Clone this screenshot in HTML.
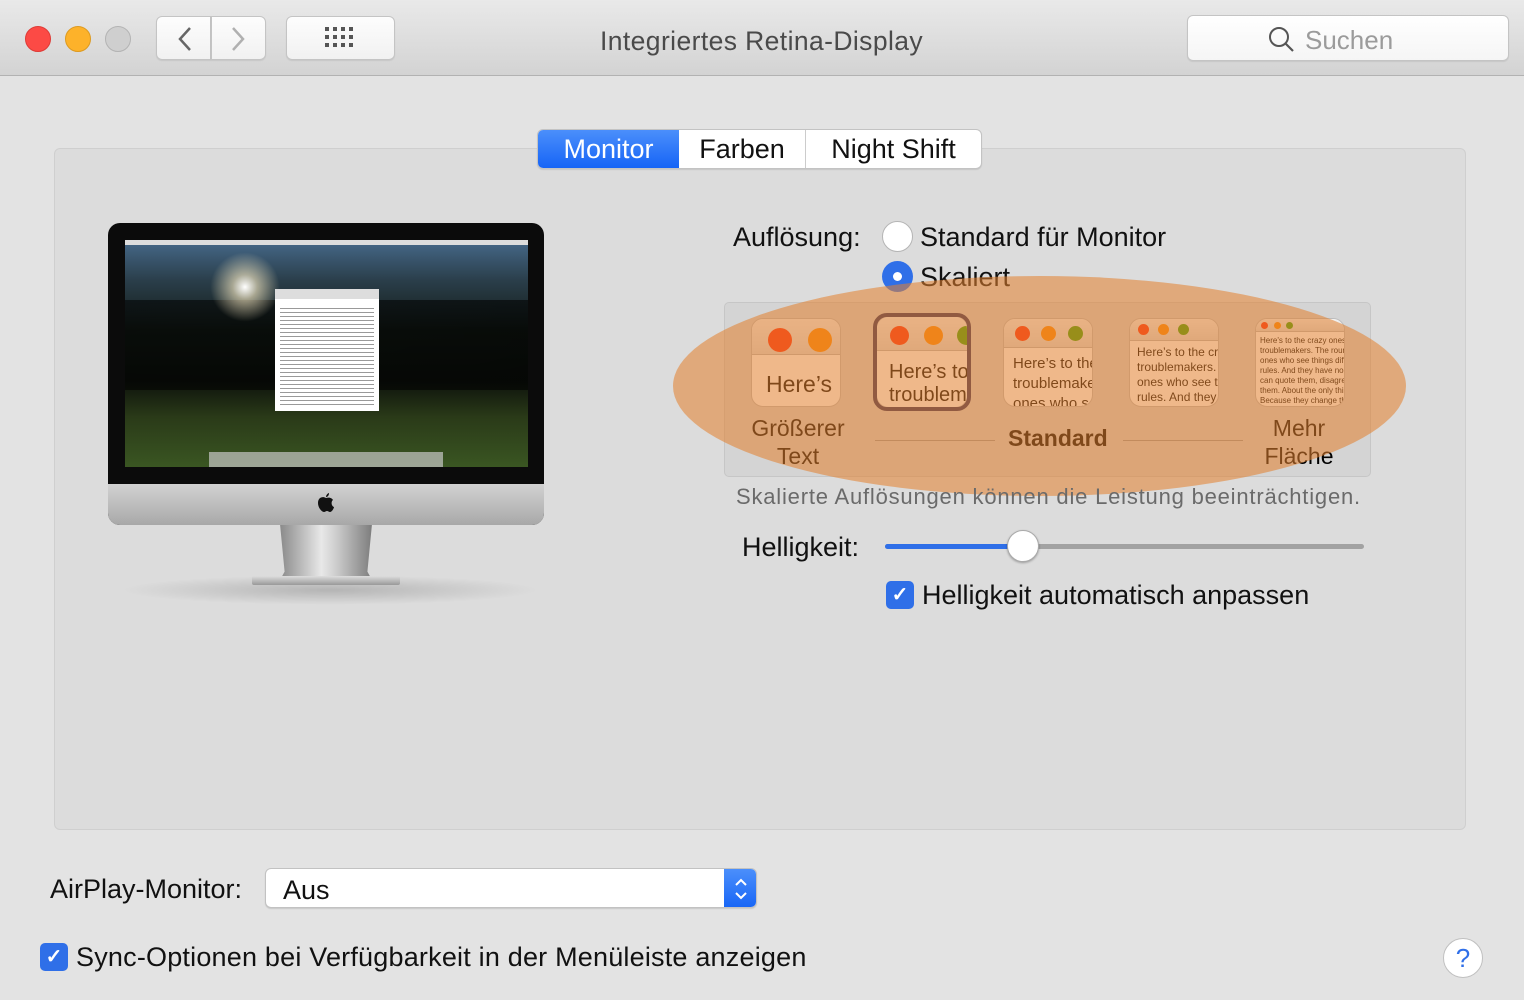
<!DOCTYPE html>
<html><head><meta charset="utf-8"><style>
*{box-sizing:border-box;margin:0;padding:0}
body{width:1524px;height:1000px;background:#e3e3e3;font-family:"Liberation Sans",sans-serif;position:relative;overflow:hidden;color:#111}
.abs{position:absolute}
.tb{left:0;top:0;width:1524px;height:76px;background:linear-gradient(#e9e9e9,#d3d3d3);border-bottom:1px solid #b2b2b2}
.dot{width:26px;height:26px;border-radius:50%;top:26px}
.btn{background:linear-gradient(#fdfdfd,#f1f1f1);border:1px solid #c4c4c4;border-radius:6px;box-shadow:0 1px 1px rgba(0,0,0,.08)}
.panel{left:54px;top:148px;width:1412px;height:682px;background:#dcdcdc;border:1px solid #cfcfcf;border-radius:6px}
.tabs{left:537px;top:129px;height:40px;display:flex;border:1px solid #c3c3c3;border-radius:6px;overflow:hidden;background:#fff;font-size:27px;box-shadow:0 1px 1px rgba(0,0,0,.1)}
.tabs div{height:38px;line-height:38px;text-align:center}
.lbl{font-size:27px;white-space:nowrap}
.thumb{border-radius:12px;overflow:hidden;background:#fff;border:1px solid #bbb}
.thumb .bar{background:linear-gradient(#f2f2f2,#ddd);border-bottom:1px solid #b8b8b8;position:relative}
.thumb .c{position:absolute;border-radius:50%}
.thumb .tx{font-family:"Liberation Sans",sans-serif;color:#000;white-space:nowrap;overflow:hidden}
.chk{background:#2f6fe8;border-radius:5px;color:#fff;text-align:center;font-weight:bold}
</style></head><body>
<div class="abs tb"></div>
<div class="abs dot" style="left:25px;background:#fc4a45;border:1px solid #de3b36"></div>
<div class="abs dot" style="left:65px;background:#fdb22a;border:1px solid #dd9a20"></div>
<div class="abs dot" style="left:105px;background:#cfcfcf;border:1px solid #b3b3b3"></div>
<div class="abs btn" style="left:156px;top:16px;width:55px;height:44px;border-radius:6px 0 0 6px"></div>
<div class="abs btn" style="left:211px;top:16px;width:55px;height:44px;border-radius:0 6px 6px 0"></div>
<svg class="abs" style="left:170px;top:24px" width="90" height="30"><path d="M20 4 L10 15 L20 26" stroke="#666" stroke-width="2.5" fill="none"/><path d="M63 4 L73 15 L63 26" stroke="#b0b0b0" stroke-width="2.5" fill="none"/></svg>
<div class="abs btn" style="left:286px;top:16px;width:109px;height:44px"></div>
<svg class="abs" style="left:325px;top:27px" width="32" height="22"><g fill="#555"><rect x="0" y="0" width="4" height="4"/><rect x="8" y="0" width="4" height="4"/><rect x="16" y="0" width="4" height="4"/><rect x="24" y="0" width="4" height="4"/><rect x="0" y="8" width="4" height="4"/><rect x="8" y="8" width="4" height="4"/><rect x="16" y="8" width="4" height="4"/><rect x="24" y="8" width="4" height="4"/><rect x="0" y="16" width="4" height="4"/><rect x="8" y="16" width="4" height="4"/><rect x="16" y="16" width="4" height="4"/><rect x="24" y="16" width="4" height="4"/></g></svg>
<div class="abs lbl" style="left:600px;top:26px;color:#4a4a4a;font-size:26.5px;letter-spacing:0.4px">Integriertes Retina-Display</div>
<div class="abs btn" style="left:1187px;top:15px;width:322px;height:46px;background:linear-gradient(#fff,#f5f5f5)"></div>
<svg class="abs" style="left:1268px;top:26px" width="28" height="28"><circle cx="11" cy="11" r="9" stroke="#555" stroke-width="2" fill="none"/><path d="M17.5 17.5 L25 25" stroke="#555" stroke-width="2.2"/></svg>
<div class="abs lbl" style="left:1305px;top:25px;color:#9b9b9b;font-size:26px">Suchen</div>

<div class="abs panel"></div>
<div class="abs tabs">
<div style="width:141px;background:linear-gradient(#4b8ffb,#1664f6);color:#fff">Monitor</div>
<div style="width:127px;border-right:1px solid #ccc">Farben</div>
<div style="width:175px">Night Shift</div>
</div>

<!-- iMac -->
<div class="abs" style="left:120px;top:575px;width:420px;height:30px;border-radius:50%;background:radial-gradient(ellipse,rgba(0,0,0,.18),rgba(0,0,0,0) 70%)"></div>
<div class="abs" style="left:280px;top:524px;width:92px;height:56px;background:linear-gradient(90deg,#8a8a8a,#e8e8e8 45%,#cfcfcf 60%,#7d7d7d);clip-path:polygon(0 0,100% 0,95% 85%,100% 100%,0 100%,5% 85%)"></div>
<div class="abs" style="left:252px;top:576px;width:148px;height:9px;background:linear-gradient(#ddd,#999);border-radius:2px"></div>
<div class="abs" style="left:108px;top:223px;width:436px;height:302px;border-radius:12px;background:#0b0b0b;overflow:hidden">
<div class="abs" style="left:0;top:261px;width:436px;height:41px;background:linear-gradient(#d2d2d2,#a8a8a8)"></div>
<div class="abs" style="left:17px;top:17px;width:403px;height:227px;background:linear-gradient(#46698a 0%,#2a3e4a 18%,#121a14 40%,#0d120c 62%,#2a3a18 78%,#3a5622 100%);overflow:hidden">
<div class="abs" style="left:-20px;top:60px;width:450px;height:90px;background:radial-gradient(ellipse at 25% 40%,rgba(0,0,0,.5),rgba(0,0,0,.6))"></div>
<div class="abs" style="left:85px;top:12px;width:70px;height:70px;border-radius:50%;background:radial-gradient(#fff,rgba(255,240,200,.6) 25%,rgba(255,255,255,0) 70%)"></div>
<div class="abs" style="left:0;top:0;width:403px;height:5px;background:#ddd"></div>
<div class="abs" style="left:150px;top:49px;width:104px;height:122px;background:#fff"><div style="height:10px;background:#ddd"></div><div style="margin:6px 5px;height:100px;background:repeating-linear-gradient(#fff 0,#fff 3px,#999 3px,#999 4px)"></div></div>
<div class="abs" style="left:84px;top:212px;width:234px;height:15px;background:rgba(200,200,200,.7)"></div>
</div>
<svg class="abs" style="left:209px;top:270px" width="18" height="20"><path d="M9 5 C6 3 1 4 1 10 C1 15 5 19 7 19 C8 19 9 18 10 18 C11 18 12 19 13 19 C15 19 17 15 17 14 C14 13 14 8 16 7 C15 5 12 4 9 5Z M9 4 C9 2 11 0 12 0 C12 2 11 4 9 4Z" fill="#111"/></svg>
</div>

<!-- resolution -->
<div class="abs lbl" style="left:733px;top:222px">Auflösung:</div>
<div class="abs" style="left:882px;top:221px;width:31px;height:31px;border-radius:50%;background:#fff;border:1px solid #b5b5b5"></div>
<div class="abs lbl" style="left:920px;top:222px">Standard für Monitor</div>
<div class="abs" style="left:882px;top:261px;width:31px;height:31px;border-radius:50%;background:#2f6fe8"><div class="abs" style="left:11px;top:11px;width:9px;height:9px;border-radius:50%;background:#fff"></div></div>
<div class="abs lbl" style="left:920px;top:262px">Skaliert</div>

<div class="abs" style="left:724px;top:302px;width:647px;height:175px;background:#d4d4d4;border:1px solid #c6c6c6;border-radius:5px"></div>
<!-- thumbs -->
<div class="abs thumb" style="left:751px;top:318px;width:90px;height:89px"><div class="bar" style="height:36px"><div class="c" style="left:16px;top:9px;width:24px;height:24px;background:#ff2a0a"></div><div class="c" style="left:56px;top:9px;width:24px;height:24px;background:#ff8a00"></div></div><div class="tx" style="font-size:23px;padding:16px 0 0 14px">Here’s</div></div>
<div class="abs" style="left:873px;top:313px;width:98px;height:98px;border-radius:14px;border:4px solid #2a2a5a"></div>
<div class="abs thumb" style="left:877px;top:317px;width:90px;height:90px;border:none"><div class="bar" style="height:34px"><div class="c" style="left:13px;top:9px;width:19px;height:19px;background:#ff2a0a"></div><div class="c" style="left:47px;top:9px;width:19px;height:19px;background:#ff8a00"></div><div class="c" style="left:80px;top:9px;width:19px;height:19px;background:#3aa000"></div></div><div class="tx" style="font-size:20px;padding:10px 0 0 12px;line-height:23px">Here’s to the<br>troublemakers</div></div>
<div class="abs thumb" style="left:1003px;top:318px;width:90px;height:89px"><div class="bar" style="height:29px"><div class="c" style="left:11px;top:7px;width:15px;height:15px;background:#ff2a0a"></div><div class="c" style="left:37px;top:7px;width:15px;height:15px;background:#ff8a00"></div><div class="c" style="left:64px;top:7px;width:15px;height:15px;background:#3aa000"></div></div><div class="tx" style="font-size:15px;padding:6px 0 0 9px;line-height:20px">Here’s to the<br>troublemakers<br>ones who see</div></div>
<div class="abs thumb" style="left:1129px;top:318px;width:90px;height:89px"><div class="bar" style="height:22px"><div class="c" style="left:8px;top:5px;width:11px;height:11px;background:#ff2a0a"></div><div class="c" style="left:28px;top:5px;width:11px;height:11px;background:#ff8a00"></div><div class="c" style="left:48px;top:5px;width:11px;height:11px;background:#3aa000"></div></div><div class="tx" style="font-size:12px;padding:4px 0 0 7px;line-height:15px">Here’s to the crazy<br>troublemakers. The<br>ones who see thing<br>rules. And they hav</div></div>
<div class="abs thumb" style="left:1255px;top:318px;width:90px;height:89px"><div class="bar" style="height:13px"><div class="c" style="left:5px;top:3px;width:7px;height:7px;background:#ff2a0a"></div><div class="c" style="left:18px;top:3px;width:7px;height:7px;background:#ff8a00"></div><div class="c" style="left:30px;top:3px;width:7px;height:7px;background:#3aa000"></div></div><div class="tx" style="font-size:8px;padding:4px 0 0 4px;line-height:10px">Here's to the crazy ones<br>troublemakers. The round<br>ones who see things diff<br>rules. And they have no<br>can quote them, disagree<br>them. About the only thi<br>Because they change thi</div></div>
<div class="abs lbl" style="left:751px;top:414px;width:94px;text-align:center;font-size:23px;line-height:28px;color:#000">Größerer<br>Text</div>
<div class="abs lbl" style="left:1252px;top:414px;width:94px;text-align:center;font-size:23px;line-height:28px;color:#000">Mehr<br>Fläche</div>
<div class="abs" style="left:875px;top:440px;width:120px;height:1px;background:#999"></div>
<div class="abs" style="left:1123px;top:440px;width:120px;height:1px;background:#999"></div>
<div class="abs lbl" style="left:1008px;top:425px;font-size:23px;font-weight:bold;color:#000">Standard</div>
<!-- overlay -->
<div class="abs" style="left:673px;top:276px;width:733px;height:220px;border-radius:50%;background:rgba(226,128,46,.56)"></div>

<div class="abs lbl" style="left:736px;top:484px;font-size:22px;color:#6a6a6a;letter-spacing:0.8px">Skalierte Auflösungen können die Leistung beeinträchtigen.</div>
<div class="abs lbl" style="left:742px;top:532px">Helligkeit:</div>
<div class="abs" style="left:885px;top:544px;width:479px;height:5px;border-radius:3px;background:#a2a2a2"></div>
<div class="abs" style="left:885px;top:544px;width:130px;height:5px;border-radius:3px;background:#2f6fe8"></div>
<div class="abs" style="left:1007px;top:530px;width:32px;height:32px;border-radius:50%;background:#fff;border:1px solid #aaa;box-shadow:0 1px 2px rgba(0,0,0,.3)"></div>
<div class="abs chk" style="left:886px;top:581px;width:28px;height:28px;font-size:20px;line-height:28px">✓</div>
<div class="abs lbl" style="left:922px;top:580px">Helligkeit automatisch anpassen</div>

<div class="abs lbl" style="left:50px;top:874px">AirPlay-Monitor:</div>
<div class="abs" style="left:265px;top:868px;width:492px;height:40px;background:#fff;border:1px solid #c2c2c2;border-radius:6px;box-shadow:0 1px 1px rgba(0,0,0,.12);overflow:hidden">
<div class="abs lbl" style="left:17px;top:6px">Aus</div>
<div class="abs" style="left:458px;top:0;width:33px;height:40px;background:linear-gradient(#4b8ffb,#1664f6)"></div>
<svg class="abs" style="left:465px;top:6px" width="20" height="28"><path d="M5 10 L10 5 L15 10 M5 18 L10 23 L15 18" stroke="#fff" stroke-width="2" fill="none"/></svg>
</div>
<div class="abs chk" style="left:40px;top:943px;width:28px;height:28px;font-size:20px;line-height:28px">✓</div>
<div class="abs lbl" style="left:76px;top:942px;letter-spacing:0.2px">Sync-Optionen bei Verfügbarkeit in der Menüleiste anzeigen</div>
<div class="abs" style="left:1443px;top:938px;width:40px;height:40px;border-radius:50%;background:#fff;border:1px solid #c0c0c0;color:#2f6fe8;font-size:26px;text-align:center;line-height:38px">?</div>
</body></html>
